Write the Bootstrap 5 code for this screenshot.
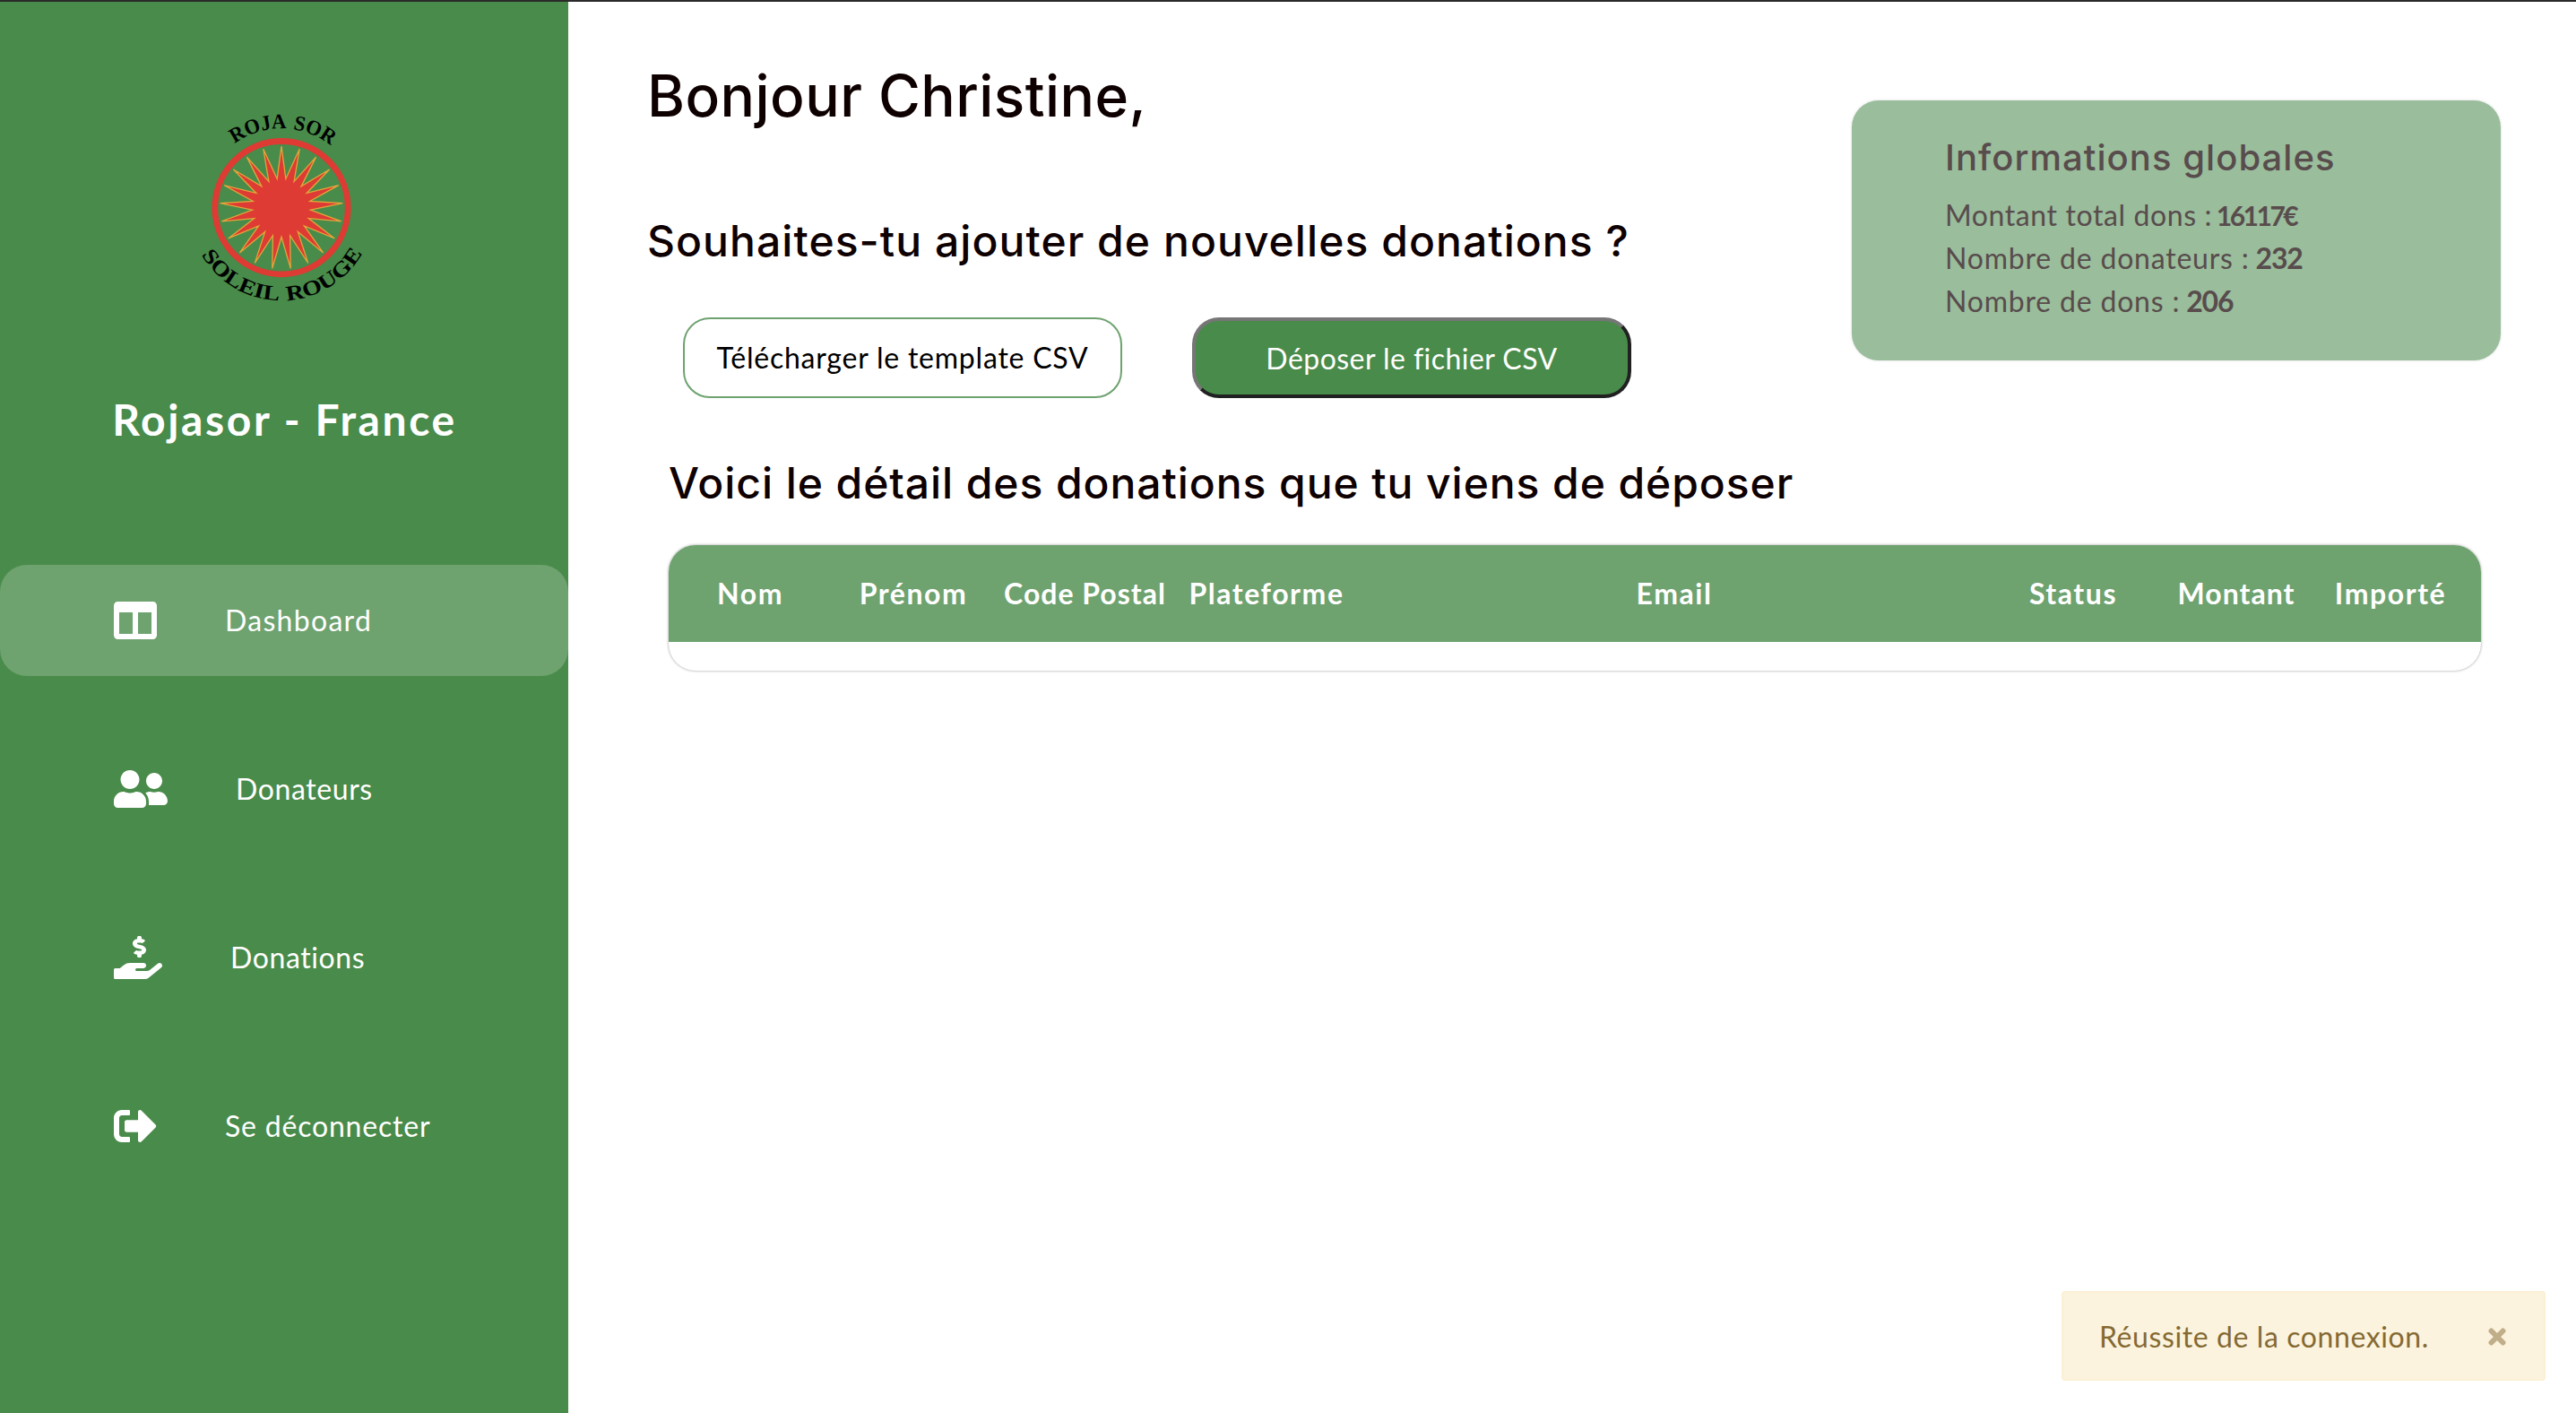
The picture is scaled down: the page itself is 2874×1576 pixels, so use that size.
<!DOCTYPE html>
<html lang="fr">
<head>
<meta charset="utf-8">
<meta name="viewport" content="width=device-width, initial-scale=1">
<title>Rojasor - France</title>
<link rel="stylesheet" href="https://cdn.jsdelivr.net/npm/bootstrap@5.3.0/dist/css/bootstrap.min.css">
<style>
  body { font-family: Lato, "Open Sans", sans-serif; font-size: 32px; color: #0e0000; letter-spacing: .6px; overflow: hidden; }
  .app-shell { height: 1576px; border-top: 2px solid #2a2a2a; }
  .side-panel { width: 634px; background: #498b4a; }
  .brand-logo { width: 240px; height: 240px; margin-top: 108px; }
  .brand-name { font-size: 48px; line-height: 60px; letter-spacing: 2.62px; margin: 88px 0 132px; padding-left: 1px; }
  .side-nav { gap: 64px; }
  .side-nav .nav-link { height: 124px; padding: 0 0 0 127px; gap: 76px; border-radius: 30px; color: #fff; }
  .side-nav .nav-link.active { background: #6ea26f; }
  .side-nav svg { height: 48px; fill: #fff; }
  .ls-dash { letter-spacing: 1.3px; }
  .ls-out { letter-spacing: .8px; }
  .title-font { font-family: Inter, sans-serif; font-weight: 500; }
  .main-area { padding-left: 88px; }
  .greeting { font-size: 64px; line-height: 74px; letter-spacing: .45px; margin: 68px 0 97px; }
  .section-title { font-size: 48px; line-height: 56px; letter-spacing: 1.06px; margin: 0; }
  .detail-zone .section-title { letter-spacing: .93px; }
  .csv-actions { padding-left: 40px; margin-top: 57px; gap: 78px; }
  .csv-btn { width: 490px; height: 90px; border-radius: 30px; font-size: 32px; padding: 0; letter-spacing: .78px; }
  .csv-get { border: 2px solid #6ea26f; color: #000; padding-bottom: 1px; }
  .csv-put { border: 4px solid; border-color: #767676 #212121 #212121 #767676; background: #498b4a; color: #fff; letter-spacing: .45px; padding-top: 2px; }
  .info-card { width: 724px; height: 290px; margin: 110px 84px 0 0; padding: 40px 0 0 104px; border: 0; border-radius: 30px; background: #9abd9c; color: #584c4c; box-shadow: 0 0 3px rgba(0,0,0,.16); line-height: 48px; }
  .info-card h2 { font-size: 40px; line-height: 48px; letter-spacing: 1.05px; margin: 0 0 16px; }
  .info-card b { letter-spacing: -1.2px; margin-left: -2px; }
  .info-card .ls-sum { letter-spacing: -2.5px; font-size: 30px; margin-left: -4px; }
  .ls-count { letter-spacing: .8px; }
  .detail-zone { margin: 67px 106px 0 24px; }
  .detail-box { margin-top: 41px; height: 140px; border-radius: 30px; box-shadow: 0 0 3px rgba(0,0,0,.42); }
  .detail-box table { table-layout: fixed; letter-spacing: 1.55px; }
  .detail-box th { height: 108px; padding: 0; border: 0; background: #6ea26f; color: #fff; text-align: center; vertical-align: middle; white-space: nowrap; }
  .detail-box .th-tight { letter-spacing: 1px; }
  .flash { right: 34px; bottom: 36px; width: 540px; height: 100px; margin: 0; padding: 2px 42px 0 40px; border: 2px solid #fcefd4; border-radius: 4px; background: #fcf3de; color: #846a33; }
</style>
<script src="https://cdn.jsdelivr.net/npm/bootstrap@5.3.0/dist/js/bootstrap.bundle.min.js"></script>
</head>
<body>
<div class="app-shell d-flex position-relative">
  <aside class="side-panel d-flex flex-column flex-shrink-0 text-white">
    <svg class="brand-logo align-self-center" viewBox="197 110 240 240" font-family="Liberation Serif, serif" font-weight="bold" letter-spacing="0">
      <defs>
        <path id="arcTop" d="M225.500 231.700A88.500 88.500 0 0 1 402.500 231.700"/>
        <path id="arcLow" d="M210.500 231.700A103.500 103.500 0 0 0 417.500 231.700"/>
      </defs>
      <circle cx="314" cy="231.700" r="74.200" fill="none" stroke="#dd3b33" stroke-width="6.800"/>
      <polygon id="sun" fill="#dd3b33" stroke="#e3a53a" stroke-width="1.300"/>
      <text font-size="23.500" text-anchor="middle" word-spacing="3"><textPath href="#arcTop" startOffset="50.600%" textLength="115" lengthAdjust="spacingAndGlyphs">ROJA SOR</textPath></text>
      <text font-size="23.500" text-anchor="middle" word-spacing="3"><textPath href="#arcLow" startOffset="50.300%" textLength="217" lengthAdjust="spacingAndGlyphs">SOLEIL ROUGE</textPath></text>
    </svg>
    <h1 class="brand-name text-center fw-bold">Rojasor - France</h1>
    <nav class="side-nav nav flex-column">
      <a class="nav-link active d-flex align-items-center" href="#">
        <svg viewBox="0 0 512 512"><path d="M464 32H48C21.490 32 0 53.490 0 80v352c0 26.510 21.490 48 48 48h416c26.510 0 48-21.490 48-48V80c0-26.510-21.490-48-48-48zM224 416H64V160h160v256zm224 0H288V160h160v256z"/></svg>
        <span class="ls-dash">Dashboard</span></a>
      <a class="nav-link d-flex align-items-center" href="#">
        <svg viewBox="0 0 640 512"><path d="M192 256c61.900 0 112-50.100 112-112S253.900 32 192 32 80 82.100 80 144s50.100 112 112 112zm76.800 32h-8.300c-20.800 10-43.900 16-68.500 16s-47.600-6-68.500-16h-8.300C51.600 288 0 339.600 0 403.200V432c0 26.500 21.500 48 48 48h288c26.500 0 48-21.500 48-48v-28.800c0-63.600-51.600-115.200-115.200-115.200zM480 256c53 0 96-43 96-96s-43-96-96-96-96 43-96 96 43 96 96 96zm48 32h-3.800c-13.900 4.800-28.600 8-44.200 8s-30.300-3.200-44.200-8H432c-20.400 0-39.200 5.900-55.700 15.400 24.400 26.300 39.700 61.200 39.700 99.800v38.400c0 2.200-.5 4.300-.6 6.400H592c26.500 0 48-21.500 48-48 0-61.900-50.100-112-112-112z"/></svg>
        <span>Donateurs</span></a>
      <a class="nav-link d-flex align-items-center" href="#">
        <svg viewBox="0 0 576 512"><path d="M271.060 144.300l54.270 14.300a8.590 8.590 0 0 1 6.630 8.100c0 4.600-4.090 8.400-9.120 8.400h-35.600a30 30 0 0 1-11.190-2.200c-5.240-2.200-11.280-1.700-15.300 2l-19 17.500a11.680 11.680 0 0 0-2.250 2.660 11.420 11.420 0 0 0 3.880 15.740 83.770 83.770 0 0 0 34.510 11.500V240c0 8.800 7.830 16 17.370 16h17.370c9.550 0 17.380-7.200 17.380-16v-17.600c32.930-3.600 57.840-31 53.500-63-3.150-23-22.460-41.300-46.560-47.700L282.680 97.400a8.590 8.590 0 0 1-6.630-8.100c0-4.600 4.090-8.400 9.120-8.400h35.600A30 30 0 0 1 332 83.100c5.230 2.200 11.280 1.700 15.300-2l19-17.500A11.310 11.310 0 0 0 368.470 61a11.430 11.430 0 0 0-3.840-15.780 83.820 83.820 0 0 0-34.520-11.500V16c0-8.800-7.820-16-17.370-16h-17.370C285.820 0 278 7.200 278 16v17.600c-32.890 3.600-57.850 31-53.510 63C227.630 119.600 247 137.900 271.060 144.300zM565.270 328.100c-11.800-10.700-30.200-10-42.600 0L430.270 402a63.640 63.640 0 0 1-40 14H272a16 16 0 0 1 0-32h78.290c15.900 0 30.710-10.900 33.250-26.600a31.200 31.200 0 0 0 .46-5.460A32 32 0 0 0 352 320H192a117.660 117.660 0 0 0-74.100 26.290L71.400 384H16a16 16 0 0 0-16 16v96a16 16 0 0 0 16 16h356.770a64 64 0 0 0 40-14L564 377a32 32 0 0 0 1.280-48.900z"/></svg>
        <span>Donations</span></a>
      <a class="nav-link d-flex align-items-center" href="#">
        <svg viewBox="0 0 512 512"><path d="M497 273L329 441c-15 15-41 4.500-41-17v-96H152c-13.300 0-24-10.700-24-24v-96c0-13.300 10.700-24 24-24h136V88c0-21.400 25.900-32 41-17l168 168c9.300 9.400 9.300 24.600 0 34zM192 436v-40c0-6.600-5.400-12-12-12H96c-17.700 0-32-14.300-32-32V160c0-17.700 14.300-32 32-32h84c6.600 0 12-5.400 12-12V76c0-6.600-5.400-12-12-12H96c-53 0-96 43-96 96v192c0 53 43 96 96 96h84c6.600 0 12-5.400 12-12z"/></svg>
        <span class="ls-out">Se déconnecter</span></a>
    </nav>
  </aside>

  <main class="main-area flex-grow-1">
    <div class="d-flex justify-content-between align-items-start">
      <section>
        <h1 class="greeting title-font">Bonjour Christine,</h1>
        <h2 class="section-title title-font">Souhaites-tu ajouter de nouvelles donations ?</h2>
        <div class="csv-actions d-flex">
          <button type="button" class="btn csv-btn csv-get">Télécharger le template CSV</button>
          <button type="button" class="btn csv-btn csv-put">Déposer le fichier CSV</button>
        </div>
      </section>
      <aside class="card info-card">
        <h2 class="title-font">Informations globales</h2>
        <div>Montant total dons : <b class="ls-sum">16117€</b></div>
        <div class="ls-count">Nombre de donateurs : <b>232</b></div>
        <div class="ls-count">Nombre de dons : <b>206</b></div>
      </aside>
    </div>
    <section class="detail-zone">
      <h2 class="section-title title-font">Voici le détail des donations que tu viens de déposer</h2>
      <div class="detail-box overflow-hidden">
        <table class="table mb-0">
          <colgroup><col width="182"><col width="182"><col width="201"><col width="204"><col width="706"><col width="184"><col width="180"><col width="164"><col width="19"></colgroup>
          <thead><tr><th>Nom</th><th>Prénom</th><th class="th-tight">Code Postal</th><th>Plateforme</th><th>Email</th><th>Status</th><th class="th-tight">Montant</th><th>Importé</th><th></th></tr></thead>
        </table>
      </div>
    </section>
  </main>

  <div class="alert flash position-absolute d-flex align-items-center justify-content-between" role="alert">
    <span>Réussite de la connexion.</span>
    <svg width="20" height="20" viewBox="0 0 20 20"><path d="M3.500 3.500l13 13M16.500 3.500l-13 13" stroke="#c0ae8a" stroke-width="6" stroke-linecap="round"/></svg>
  </div>
</div>
<script>
  // 21-ray sun: points alternate between the tip radius and the valley radius
  const pts = [];
  for (let i = 0; i < 42; i++) {
    const r = i % 2 ? 32.5 : 68.5, a = i * Math.PI / 21;
    pts.push((314 + r * Math.sin(a)).toFixed(2) + ',' + (231.7 - r * Math.cos(a)).toFixed(2));
  }
  document.getElementById('sun').setAttribute('points', pts.join(' '));
</script>
</body>
</html>
